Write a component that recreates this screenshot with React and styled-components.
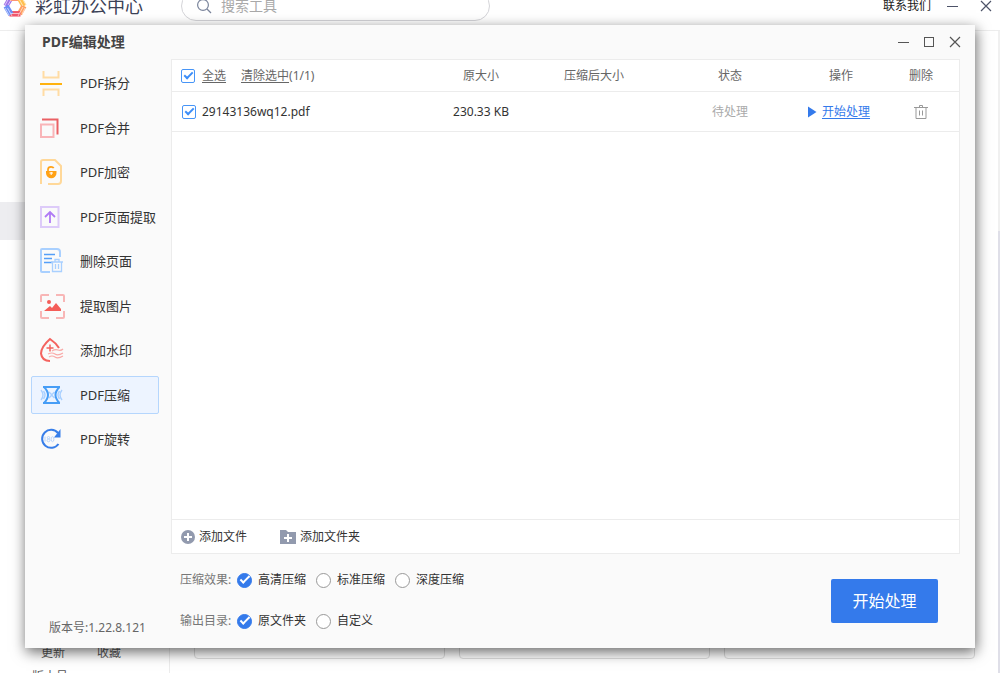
import React, { useState } from "react";
import styled, { createGlobalStyle, css } from "styled-components";

const GlobalStyle = createGlobalStyle`
  *, *::before, *::after { box-sizing: border-box; }
  body {
    margin: 0;
    background: #fff;
    color: #333;
    font-family: "Noto Sans", "Noto Sans CJK SC", sans-serif;
    font-size: 12px;
    line-height: 16px;
  }
  button, input { font: inherit; color: inherit; }
  button { border: 0; padding: 0; background: none; cursor: pointer; }
`;

/* ---------- Main window behind the dialog ---------- */

const Page = styled.div`
  position: relative;
  display: flex;
  flex-direction: column;
  height: 100vh;
  overflow: hidden;
`;

const TopBar = styled.header`
  display: flex;
  align-items: center;
  flex: none;
  height: 51px;
  margin-top: -20px;
  padding: 1px 7px 0 3px;
  border-bottom: 1px solid #ededed;
`;

const Brand = styled.div`
  display: flex;
  align-items: center;
  gap: 8px;
  width: 178px;
  color: #3c4257;
  font-size: 18px;
  line-height: 24px;
`;

const SearchBox = styled.label`
  display: flex;
  align-items: center;
  gap: 9px;
  width: 309px;
  height: 30px;
  padding: 0 14px;
  border: 1px solid #d4d4d8;
  border-radius: 15px;
  color: #7b859c;
`;

const SearchInput = styled.input`
  flex: 1;
  min-width: 0;
  padding: 0;
  border: 0;
  outline: 0;
  background: none;
  font-size: 14px;
  &::placeholder { color: #a9a9a9; opacity: 1; }
`;

const TopActions = styled.div`
  display: flex;
  align-items: center;
  gap: 15px;
  margin-left: auto;
`;

const ContactLink = styled.a`
  color: #222;
  text-decoration: none;
`;

const Backdrop = styled.div`
  display: flex;
  flex: 1;
  min-height: 0;
`;

const BackSidebar = styled.aside`
  display: flex;
  flex-direction: column;
  width: 170px;
  padding-top: 171px;
  border-right: 1px solid #ececec;
`;

const BackCurrent = styled.div`
  height: 38px;
  background: #ededf0;
`;

const BackLinks = styled.div`
  display: flex;
  gap: 32px;
  margin-top: auto;
  padding-left: 41px;
  color: #555;
`;

const BackVersion = styled.div`
  height: 4px;
  margin-top: 8px;
  padding-left: 32px;
  overflow: hidden;
  color: #555;
`;

const BackCards = styled.div`
  display: grid;
  grid-template-columns: repeat(3, 1fr);
  gap: 14px;
  flex: 1;
  padding: 20px 23px 14px 24px;
`;

const BackCard = styled.div`
  border: 1px solid #dedede;
  border-radius: 4px;
`;

const BackScroll = styled.div`
  width: 2px;
  padding-top: 200px;
  background: #f0f0f0;
`;

const BackScrollThumb = styled.div`
  height: 100%;
  background: #dfdfe8;
`;

/* ---------- Dialog ---------- */

const Dialog = styled.section`
  position: absolute;
  inset: 25px;
  display: flex;
  flex-direction: column;
  background: #fafafa;
  box-shadow: 1px 4px 13px rgba(0, 0, 0, 0.6);
`;

const TitleBar = styled.header`
  display: flex;
  align-items: center;
  justify-content: space-between;
  flex: none;
  height: 34px;
  padding: 0 13px 0 17px;
`;

const Title = styled.h1`
  margin: 0;
  font-size: 14px;
  line-height: 20px;
  font-weight: 700;
  color: #444;
`;

const WindowControls = styled.div`
  display: flex;
  gap: ${(p) => p.$gap}px;
`;

const IconButton = styled.button`
  display: inline-flex;
  align-items: center;
  justify-content: center;
  color: ${(p) => p.$color || "#555"};
  vertical-align: middle;
  svg { display: block; }
`;

const Body = styled.div`
  display: flex;
  flex: 1;
  min-height: 0;
`;

const Sidebar = styled.aside`
  display: flex;
  flex-direction: column;
  justify-content: space-between;
  flex: none;
  width: 146px;
  padding: 5px 12px 12px 6px;
`;

const Nav = styled.nav`
  display: flex;
  flex-direction: column;
  justify-content: space-between;
  height: 394px;
`;

const NavItem = styled.button`
  display: flex;
  align-items: center;
  gap: 14px;
  height: 38px;
  padding-left: 8px;
  border: 1px solid transparent;
  border-radius: 2px;
  font-size: 13px;
  white-space: nowrap;
  ${(p) => p.$active && css`
    border-color: #b5d6fd;
    background: #edf4ff;
  `}
  svg { flex: none; }
`;

const Version = styled.div`
  padding-left: 18px;
  color: #666;
`;

const Main = styled.main`
  display: flex;
  flex-direction: column;
  flex: 1;
  min-width: 0;
  padding-right: 15px;
`;

const FilePanel = styled.div`
  display: flex;
  flex-direction: column;
  flex: 1;
  border: 1px solid #ececec;
  background: #fff;
`;

const FileTable = styled.table`
  width: 100%;
  table-layout: fixed;
  border-collapse: separate;
  border-spacing: 0;
`;

const Col = styled.col`
  width: ${(p) => (p.$width ? `${p.$width}px` : "auto")};
`;

const HeadCell = styled.th`
  height: 32px;
  padding: 0;
  border-bottom: 1px solid #ececec;
  color: #666;
  font-weight: 400;
  text-align: ${(p) => (p.$start ? "left" : "center")};
`;

const Cell = styled.td`
  height: 40px;
  padding: 0;
  border-bottom: 1px solid #ececec;
  color: ${(p) => (p.$muted ? "#aaa" : "#333")};
  text-align: ${(p) => (p.$start ? "left" : "center")};
`;

const Inline = styled.div`
  display: flex;
  align-items: center;
  gap: 15px;
  padding-left: ${(p) => p.$indent}px;
`;

const CheckLabel = styled.label`
  display: flex;
  align-items: center;
  gap: ${(p) => (p.$underline ? 7 : 6)}px;
  text-decoration: ${(p) => (p.$underline ? "underline" : "none")};
  text-underline-offset: 2px;
`;

const TextButton = styled.button`
  color: #666;
  text-decoration: underline;
  text-underline-offset: 2px;
`;

const StartLink = styled.button`
  display: inline-flex;
  align-items: center;
  gap: 5px;
  padding-right: 5px;
  color: #347aeb;
  vertical-align: middle;
  span { text-decoration: underline; text-underline-offset: 2px; }
`;

const Checkbox = styled.input.attrs({ type: "checkbox" })`
  appearance: none;
  display: grid;
  place-items: center;
  width: 14px;
  height: 14px;
  margin: 0;
  border: 1px solid #4795f7;
  border-radius: 2px;
  background: #fff;
  &:checked::after {
    content: "";
    width: 9px;
    height: 5px;
    margin-bottom: 3px;
    border: solid #3d8ef8;
    border-width: 0 0 2px 2px;
    transform: rotate(-45deg);
  }
`;

const Radio = styled.input.attrs({ type: "radio" })`
  appearance: none;
  display: grid;
  place-items: center;
  width: 15px;
  height: 15px;
  margin: 0;
  border: 1px solid #999;
  border-radius: 50%;
  background: #fff;
  &:checked { border-color: #347aeb; background: #347aeb; }
  &:checked::after {
    content: "";
    width: 10px;
    height: 5px;
    margin-bottom: 3px;
    border: solid #fff;
    border-width: 0 0 2px 2px;
    transform: rotate(-45deg);
  }
`;

const PanelFooter = styled.div`
  display: flex;
  align-items: center;
  gap: 33px;
  height: 34px;
  margin-top: auto;
  padding-left: 9px;
  border-top: 1px solid #ececec;
`;

const AddButton = styled.button`
  display: flex;
  align-items: center;
  gap: 4px;
`;

const Settings = styled.div`
  display: flex;
  align-items: flex-start;
  justify-content: space-between;
  height: 94px;
  padding: 17px 22px 0 9px;
`;

const OptionRows = styled.div`
  display: flex;
  flex-direction: column;
  gap: 25px;
  padding-top: 1px;
`;

const OptionGroup = styled.fieldset`
  display: flex;
  align-items: center;
  gap: 10px;
  min-width: 0;
  margin: 0;
  padding: 0;
  border: 0;
`;

const OptionLegend = styled.legend`
  float: left;
  width: 52px;
  margin-right: -5px;
  padding: 0;
  color: #777;
`;

const OptionLabel = styled.label`
  display: flex;
  align-items: center;
  gap: 6px;
`;

const PrimaryButton = styled.button`
  width: 107px;
  height: 44px;
  margin-top: 8px;
  border-radius: 2px;
  background: #347aeb;
  color: #fff;
  font-size: 16px;
`;

/* ---------- Icons ---------- */

const Icon = ({ w = 26, h = 26, children }) => (
  <svg width={w} height={h} viewBox={`0 0 ${w} ${h}`} fill="none" aria-hidden="true">{children}</svg>
);

const Minus = () => <Icon w={13} h={14}><path d="M1 7.5h11" stroke="currentColor" /></Icon>;
const Square = () => <Icon w={14} h={14}><rect x="2.5" y="2.5" width="9" height="9" stroke="currentColor" /></Icon>;
const Cross = () => <Icon w={14} h={14}><path d="M2 2l10 10M12 2L2 12" stroke="currentColor" strokeWidth="1.2" /></Icon>;

const Logo = () => (
  <Icon w={24} h={24}>
    <g strokeWidth="5.5">
      <path d="M3 12L7.5 4.2" stroke="#a272e8" />
      <path d="M7 4.2h10" stroke="#ff8f6b" />
      <path d="M16.5 4.2L21 12" stroke="#ffc04f" />
      <path d="M21 12L16.5 19.8" stroke="#ffa060" />
      <path d="M17.5 19.8H6.5" stroke="#f0566c" />
      <path d="M8 20.5L3 12" stroke="#6c8df5" />
    </g>
    <path d="M4.5 14l4.5 8M2 14l4 7M2 11l4-7M5 11l3-5M16 5l4 7M19 4l4 7M15 22l5-9M19 20l3-6M8 19.5h8" stroke="#fff" strokeWidth="0.6" />
  </Icon>
);

const SearchIcon = () => (
  <Icon w={16} h={16}>
    <circle cx="7" cy="7" r="5.4" stroke="currentColor" strokeWidth="1.2" />
    <path d="M11 11l4 4" stroke="currentColor" strokeWidth="1.2" />
  </Icon>
);

const SplitIcon = () => (
  <Icon>
    <path d="M3.5 1v6.5h15V1M3.5 26v-6.5h15V26" stroke="#ffdca4" strokeWidth="2" />
    <path d="M0 14h22" stroke="#ffb20e" strokeWidth="2" />
  </Icon>
);

const MergeIcon = () => (
  <Icon>
    <path d="M2 4.5h15.5v15" stroke="#ea6064" strokeWidth="2" />
    <rect x="1" y="9.5" width="12.5" height="12.5" stroke="#f9b5b8" strokeWidth="2" />
  </Icon>
);

const LockIcon = () => (
  <Icon>
    <path d="M1 25V3q0-2 2-2h12l6 6v15q0 3-3 3H8" stroke="#ffd899" strokeWidth="2" />
    <path d="M8 13v-2.5q0-2.7 3-2.7 2 0 2.7 1.4" stroke="#ffa114" strokeWidth="1.7" />
    <path d="M6 12h10.5v2a5.2 5.2 0 0 1-10.5 0z" fill="#ffa114" />
    <path d="M9.5 14h3.5M11.2 13v3" stroke="#fff" />
  </Icon>
);

const ExtractIcon = () => (
  <Icon>
    <rect x="1" y="3" width="17.5" height="20" stroke="#ddcbf9" strokeWidth="2" />
    <path d="M10 19V8M5 13l5-5 5 5" stroke="#b07af5" strokeWidth="1.8" />
  </Icon>
);

const DeletePageIcon = () => (
  <Icon>
    <path d="M20 9V4q0-3-3-3H2Q1 1 1 2v21q0 1 1 1h8" stroke="#a9d0ff" strokeWidth="2" />
    <path d="M4 6.5h11M4 10.5h8M4 14.5h9" stroke="#559ff8" strokeWidth="1.3" />
    <path d="M11 14h12M15 13.5v-2h4v2M12.5 14v9.5h9V14M15.5 16v5M18.5 16v5" stroke="#a9d0ff" strokeWidth="1.3" />
  </Icon>
);

const ImageIcon = () => (
  <Icon>
    <path d="M1 9V3q0-1 1-1h7M16 2h7q1 0 1 1v6M24 18v6q0 1-1 1h-7M9 25H2q-1 0-1-1v-6" stroke="#f8b6b6" strokeWidth="2" />
    <circle cx="9" cy="9" r="2" fill="#f45d58" />
    <path d="M4 18l6-5 2 2 4-5 5 6v2z" fill="#f45d58" />
  </Icon>
);

const WatermarkIcon = () => (
  <Icon>
    <path d="M19 11Q16 6 10 2Q1 10 1 16.5q1 7.5 9 7.5" stroke="#f4635f" strokeWidth="2" />
    <path d="M10 7.5v7M6.5 11h7" stroke="#f4635f" strokeWidth="1.5" />
    <path d="M12 14q3-2 6-1t5-1M8 17q4-2 7 0t8-1M9 20q3-2 6 0t8-1" stroke="#f9aaa8" strokeWidth="1.2" />
  </Icon>
);

const CompressIcon = () => (
  <Icon>
    <path d="M1 8q4 5 0 10M22 8q-4 5 0 10M3.5 9q3 4 0 8M19.500 9q-3 4 0 8M9 10l3 3-3 3M14.500 10l-3 3 3 3" stroke="#a9d0ff" strokeWidth="1.4" />
    <path d="M3 5h17M3 21h17M4 5q8 8 0 16M19.500 5q-8 8 0 16" stroke="#469df6" strokeWidth="2" />
  </Icon>
);

const Rotate180Icon = () => (
  <Icon>
    <path d="M18.500 18A9 9 0 1 1 18 7" stroke="#377ee9" strokeWidth="2" />
    <path d="M20.500 3v8.500h-6.500z" fill="#377ee9" />
    <path d="M5 10.500v5" stroke="#b8d4fb" />
    <circle cx="8.500" cy="11.700" r="1.200" stroke="#b8d4fb" />
    <circle cx="8.500" cy="14.400" r="1.400" stroke="#b8d4fb" />
    <ellipse cx="12.500" cy="13.200" rx="1.400" ry="2.500" stroke="#b8d4fb" />
  </Icon>
);

const PlayIcon = () => <Icon w={10} h={12}><path d="M1 0.5L9.5 6 1 11.5z" fill="#347aeb" /></Icon>;

const TrashIcon = () => (
  <Icon w={16} h={16}>
    <path d="M1 3.5h14M6.5 3V1.500h3V3M3 4v10.500h10V4M6.500 6.500v5M9.500 6.500v5" stroke="#999" />
  </Icon>
);

const PlusCircle = () => (
  <Icon w={14} h={14}>
    <circle cx="7" cy="7" r="7" fill="#929aae" />
    <path d="M7 3v8M3 7h8" stroke="#fff" strokeWidth="2" />
  </Icon>
);

const PlusFolder = () => (
  <Icon w={16} h={14}>
    <path d="M0 0h6l2 2h8v12H0z" fill="#929aae" />
    <path d="M8 4v8M4 8h8" stroke="#fff" strokeWidth="2" />
  </Icon>
);

/* ---------- Data ---------- */

const tools = [
  { label: "PDF拆分", Glyph: SplitIcon },
  { label: "PDF合并", Glyph: MergeIcon },
  { label: "PDF加密", Glyph: LockIcon },
  { label: "PDF页面提取", Glyph: ExtractIcon },
  { label: "删除页面", Glyph: DeletePageIcon },
  { label: "提取图片", Glyph: ImageIcon },
  { label: "添加水印", Glyph: WatermarkIcon },
  { label: "PDF压缩", Glyph: CompressIcon },
  { label: "PDF旋转", Glyph: Rotate180Icon },
];

const settings = [
  { name: "quality", label: "压缩效果:", options: ["高清压缩", "标准压缩", "深度压缩"] },
  { name: "output", label: "输出目录:", options: ["原文件夹", "自定义"] },
];

export default function App() {
  const [active, setActive] = useState("PDF压缩");

  return (
    <Page>
      <GlobalStyle />
      <TopBar>
        <Brand><Logo />彩虹办公中心</Brand>
        <SearchBox>
          <SearchIcon />
          <SearchInput type="text" placeholder="搜索工具" aria-label="搜索工具" />
        </SearchBox>
        <TopActions>
          <ContactLink href="#contact">联系我们</ContactLink>
          <WindowControls $gap={20}>
            <IconButton $color="#4d5368" aria-label="最小化"><Minus /></IconButton>
            <IconButton $color="#4d5368" aria-label="关闭"><Cross /></IconButton>
          </WindowControls>
        </TopActions>
      </TopBar>
      <Backdrop>
        <BackSidebar>
          <BackCurrent />
          <BackLinks><span>更新</span><span>收藏</span></BackLinks>
          <BackVersion>版本号</BackVersion>
        </BackSidebar>
        <BackCards><BackCard /><BackCard /><BackCard /></BackCards>
        <BackScroll><BackScrollThumb /></BackScroll>
      </Backdrop>

      <Dialog role="dialog" aria-labelledby="dialog-title">
        <TitleBar>
          <Title id="dialog-title">PDF编辑处理</Title>
          <WindowControls $gap={12}>
            <IconButton aria-label="最小化"><Minus /></IconButton>
            <IconButton aria-label="最大化"><Square /></IconButton>
            <IconButton aria-label="关闭"><Cross /></IconButton>
          </WindowControls>
        </TitleBar>
        <Body>
          <Sidebar>
            <Nav>
              {tools.map(({ label, Glyph }) => (
                <NavItem key={label} $active={label === active} onClick={() => setActive(label)}>
                  <Glyph />{label}
                </NavItem>
              ))}
            </Nav>
            <Version>版本号:1.22.8.121</Version>
          </Sidebar>
          <Main>
            <FilePanel>
              <FileTable>
                <colgroup>
                  <Col /><Col $width={92} /><Col $width={134} /><Col $width={138} /><Col $width={84} /><Col $width={76} />
                </colgroup>
                <thead>
                  <tr>
                    <HeadCell $start>
                      <Inline $indent={9}>
                        <CheckLabel $underline><Checkbox defaultChecked />全选</CheckLabel>
                        <span><TextButton>清除选中</TextButton>(1/1)</span>
                      </Inline>
                    </HeadCell>
                    <HeadCell>原大小</HeadCell>
                    <HeadCell>压缩后大小</HeadCell>
                    <HeadCell>状态</HeadCell>
                    <HeadCell>操作</HeadCell>
                    <HeadCell>删除</HeadCell>
                  </tr>
                </thead>
                <tbody>
                  <tr>
                    <Cell $start>
                      <Inline $indent={10}>
                        <CheckLabel><Checkbox defaultChecked />29143136wq12.pdf</CheckLabel>
                      </Inline>
                    </Cell>
                    <Cell>230.33 KB</Cell>
                    <Cell />
                    <Cell $muted>待处理</Cell>
                    <Cell><StartLink><PlayIcon /><span>开始处理</span></StartLink></Cell>
                    <Cell><IconButton aria-label="删除"><TrashIcon /></IconButton></Cell>
                  </tr>
                </tbody>
              </FileTable>
              <PanelFooter>
                <AddButton><PlusCircle />添加文件</AddButton>
                <AddButton><PlusFolder />添加文件夹</AddButton>
              </PanelFooter>
            </FilePanel>
            <Settings>
              <OptionRows>
                {settings.map(({ name, label, options }) => (
                  <OptionGroup key={name}>
                    <OptionLegend>{label}</OptionLegend>
                    {options.map((option, i) => (
                      <OptionLabel key={option}>
                        <Radio name={name} defaultChecked={i === 0} />{option}
                      </OptionLabel>
                    ))}
                  </OptionGroup>
                ))}
              </OptionRows>
              <PrimaryButton>开始处理</PrimaryButton>
            </Settings>
          </Main>
        </Body>
      </Dialog>
    </Page>
  );
}
